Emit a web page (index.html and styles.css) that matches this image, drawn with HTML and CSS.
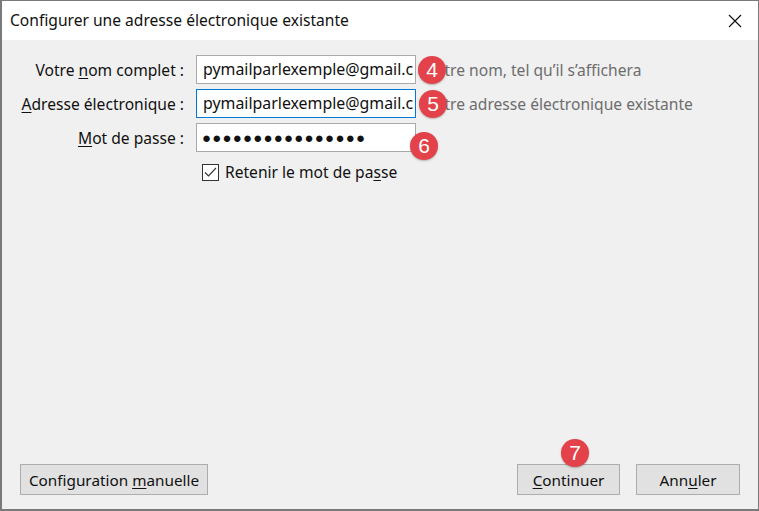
FILE: index.html
```html
<!DOCTYPE html>
<html lang="fr">
<head>
<meta charset="utf-8">
<link rel="stylesheet" href="styles.css">
</head>
<body>
<div class="window">
  <div class="titlebar">
    <span class="title">Configurer une adresse électronique existante</span>
    <svg class="close" width="14" height="14" viewBox="0 0 14 14"><path d="M1 1 L13 13 M13 1 L1 13" stroke="#111" stroke-width="1.2" fill="none"/></svg>
  </div>
  <div class="content">
    <div class="form">
      <label class="lbl">Votre <u>n</u>om complet :</label>
      <div class="field">
        <div class="input"><div class="val">pymailparlexemple@gmail.com</div></div>
        <span class="hint">Votre nom, tel qu’il s’affichera</span>
        <span class="badge b4">4</span>
      </div>
      <label class="lbl"><u>A</u>dresse électronique :</label>
      <div class="field">
        <div class="input focus"><div class="val">pymailparlexemple@gmail.com</div></div>
        <span class="hint">Votre adresse électronique existante</span>
        <span class="badge b5">5</span>
      </div>
      <label class="lbl"><u>M</u>ot de passe :</label>
      <div class="field">
        <div class="input pwd"><div class="val">●●●●●●●●●●●●●●●●</div></div>
        <span class="badge b6">6</span>
      </div>
      <span></span>
      <div class="check">
        <span class="box"><svg width="13" height="11" viewBox="0 0 13 11"><path d="M1 5.5 L4.5 9 L12 1" stroke="#333" stroke-width="1.1" fill="none"/></svg></span>
        <span>Retenir le mot de pa<u>s</u>se</span>
      </div>
    </div>
    <div class="footer">
      <button class="btn manual">Configuration <u>m</u>anuelle</button>
      <div class="spacer"></div>
      <div class="btnwrap">
        <button class="btn cont"><u>C</u>ontinuer</button>
        <span class="badge b7">7</span>
      </div>
      <button class="btn cancel">Ann<u>u</u>ler</button>
    </div>
  </div>
</div>
</body>
</html>
```
FILE: styles.css
```css
* { box-sizing: border-box; }
html, body { margin: 0; padding: 0; }
body {
  width: 759px;
  height: 511px;
  font-family: "Noto Sans", "Open Sans", sans-serif;
  font-size: 15.6px;
  color: #111;
  overflow: hidden;
}
.window {
  width: 759px;
  height: 511px;
  border: 1px solid #7a7a7a;
  border-left-width: 2px;
  border-bottom-width: 2px;
  display: flex;
  flex-direction: column;
  background: #f0f0f0;
}
.titlebar {
  height: 39px;
  background: #fff;
  display: flex;
  align-items: center;
  padding-left: 8px;
  padding-right: 16px;
  flex: none;
}
.title {
  font-size: 15.6px;
  flex: 1;
  padding-bottom: 1px;
}
.close { flex: none; }
.content {
  flex: 1;
  display: flex;
  flex-direction: column;
  padding: 15px 18px 14px 18px;
}
.form {
  display: grid;
  grid-template-columns: 164px 1fr;
  column-gap: 12px;
  row-gap: 5px;
  align-items: center;
}
.lbl {
  text-align: right;
  font-size: 15.6px;
  white-space: nowrap;
}
u { text-decoration-thickness: 1px; text-underline-offset: 2px; }
.field {
  display: flex;
  align-items: center;
  position: relative;
}
.input {
  width: 220px;
  height: 29px;
  background: #fff;
  border: 1px solid #a9a9a9;
  padding: 0 2px 0 6px;
  line-height: 27px;
  font-size: 15.9px;
  flex: none;
}
.val {
  white-space: nowrap;
  overflow: hidden;
  width: 100%;
}
.input.focus { border-color: #0078d7; }
.input.pwd { font-size: 15px; letter-spacing: 1.2px; padding-left: 5px; }
.hint {
  margin-left: 10px;
  color: #6d6d6d;
  font-size: 15.6px;
  white-space: nowrap;
}
.badge {
  position: absolute;
  width: 28px;
  height: 28px;
  border-radius: 50%;
  background: #e3424a;
  color: #fff;
  font-family: "Liberation Sans", sans-serif;
  font-size: 21px;
  line-height: 28px;
  text-align: center;
  box-shadow: 0 1px 2px rgba(0,0,0,0.25);
}
.b4 { left: 222px; top: 1px; }
.b5 { left: 223px; top: 1px; }
.b6 { left: 214px; top: 9px; }
.check {
  display: flex;
  align-items: center;
  margin-top: 4px;
  padding-left: 6px;
  font-size: 15.6px;
}
.box {
  width: 17px;
  height: 17px;
  border: 1px solid #333;
  background: #fff;
  display: flex;
  align-items: center;
  justify-content: center;
  margin-right: 6px;
}
.footer {
  margin-top: auto;
  display: flex;
  align-items: flex-end;
  gap: 16px;
}
.spacer { flex: 1; }
.btn {
  height: 31px;
  border: 1px solid #adadad;
  background: #e1e1e1;
  font-family: "Noto Sans", "Open Sans", sans-serif;
  font-size: 15.3px;
  color: #111;
  padding: 0 4px;
  margin: 0;
}
.manual { width: 188px; }
.btnwrap { position: relative; display: flex; }
.cont { width: 103px; }
.cancel { width: 104px; }
.b7 { left: 44px; top: -25px; }
```
